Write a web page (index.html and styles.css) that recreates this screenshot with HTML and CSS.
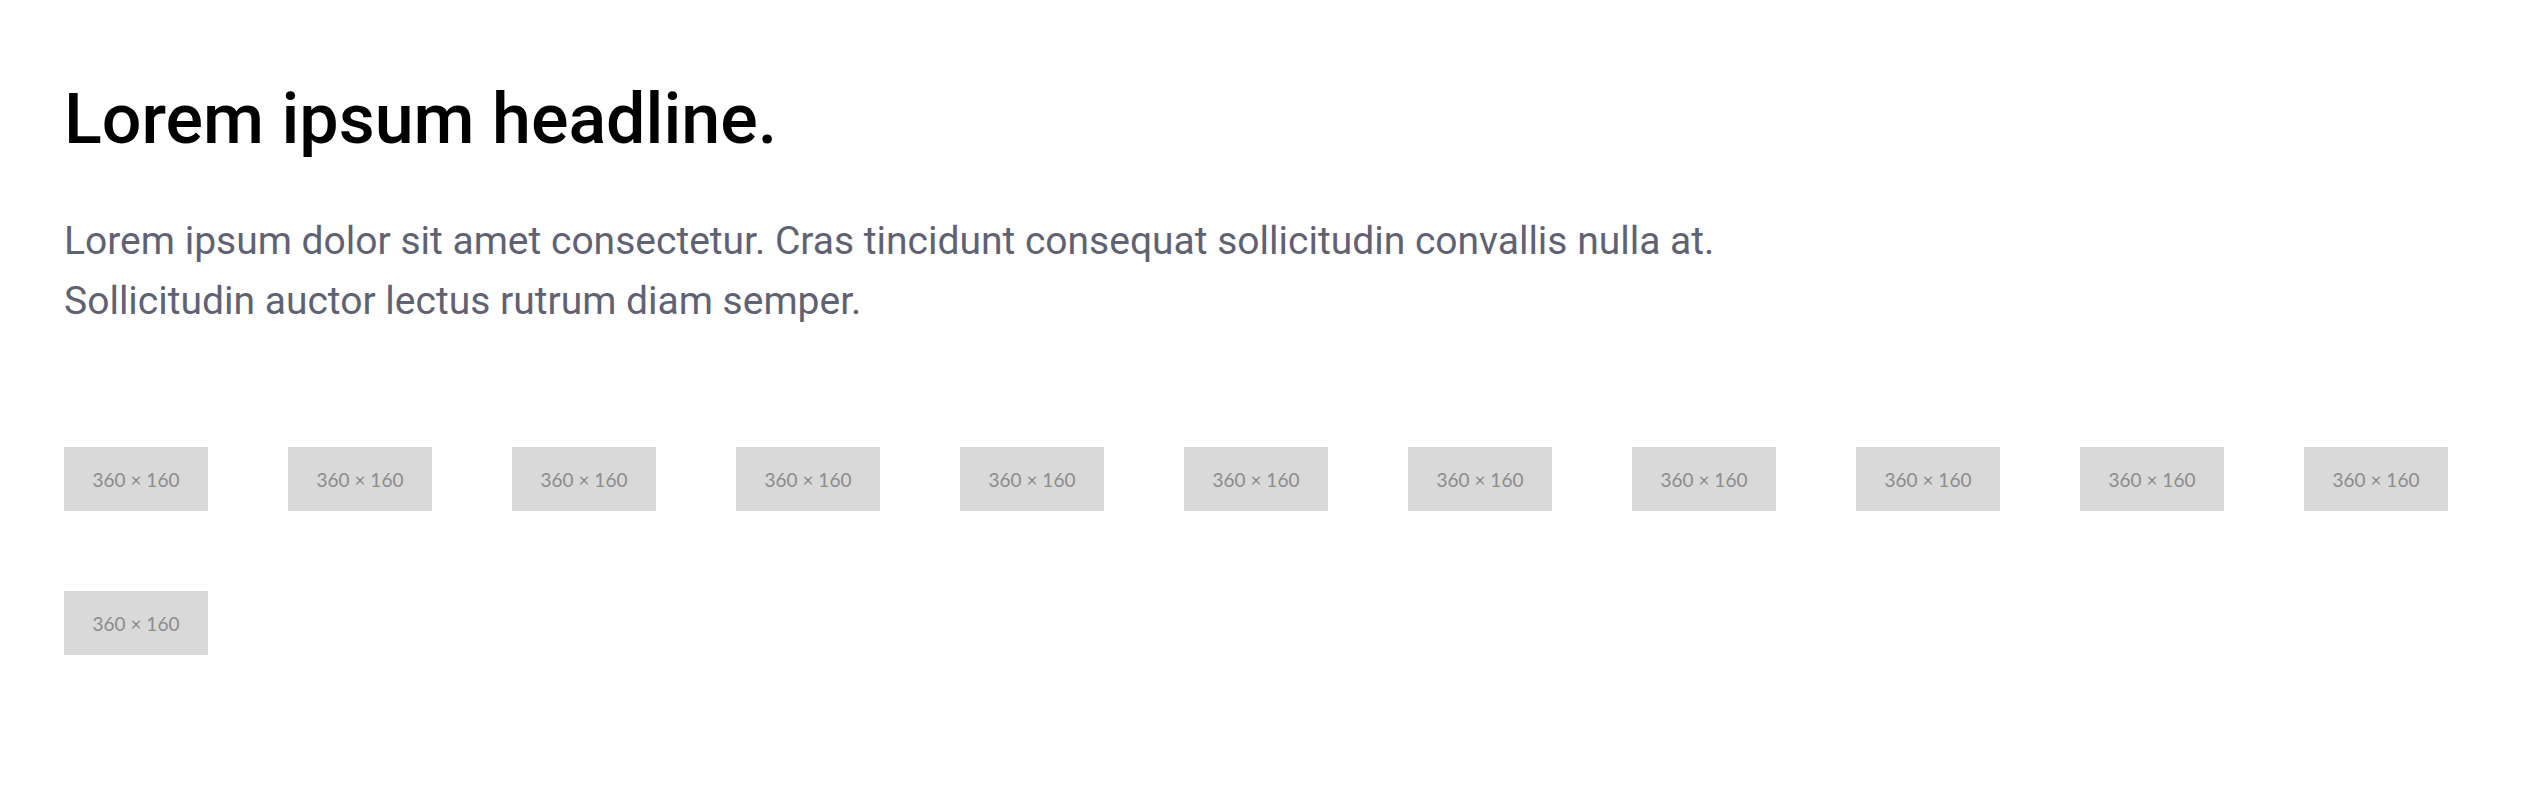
FILE: index.html
```html
<!DOCTYPE html>
<html lang="en">
<head>
<meta charset="utf-8">
<title>Lorem ipsum headline.</title>
<link rel="stylesheet" href="styles.css">
</head>
<body>
<section class="section">
  <h1 class="headline">Lorem ipsum headline.</h1>
  <p class="lead">Lorem ipsum dolor sit amet consectetur. Cras tincidunt consequat sollicitudin convallis nulla at.<br>Sollicitudin auctor lectus rutrum diam semper.</p>
  <div class="grid">
    <div class="ph">360 × 160</div>
    <div class="ph">360 × 160</div>
    <div class="ph">360 × 160</div>
    <div class="ph">360 × 160</div>
    <div class="ph">360 × 160</div>
    <div class="ph">360 × 160</div>
    <div class="ph">360 × 160</div>
    <div class="ph">360 × 160</div>
    <div class="ph">360 × 160</div>
    <div class="ph">360 × 160</div>
    <div class="ph">360 × 160</div>
    <div class="ph">360 × 160</div>
  </div>
</section>
</body>
</html>
```
FILE: styles.css
```css
html, body {
  margin: 0;
  padding: 0;
  background: #ffffff;
}
.section {
  padding: 64px 64px 0 64px;
  font-family: Roboto, "Liberation Sans", sans-serif;
}
.headline {
  margin: 0;
  font-size: 70px;
  line-height: 110px;
  font-weight: 500;
  color: #000000;
  letter-spacing: 0;
}
.lead {
  margin: 37px 0 0 0;
  font-size: 39px;
  line-height: 60px;
  font-weight: 400;
  color: #5f6273;
  letter-spacing: 0;
}
.grid {
  margin-top: 116px;
  display: flex;
  flex-wrap: wrap;
  column-gap: 80px;
  row-gap: 80px;
}
.ph {
  width: 144px;
  height: 64px;
  background: #d9d9d9;
  color: #8c8c8c;
  font-family: Lato, "Liberation Sans", sans-serif;
  font-size: 19px;
  display: flex;
  align-items: center;
  justify-content: center;
}
```
